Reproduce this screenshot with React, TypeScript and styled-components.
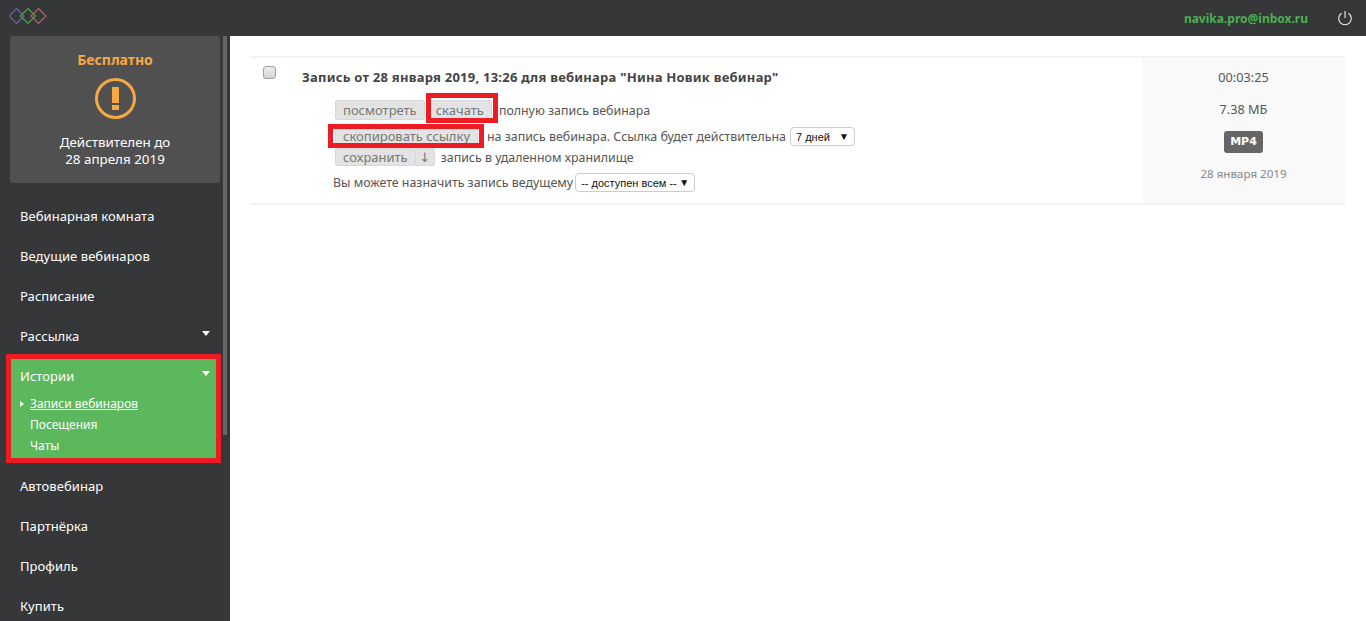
import styled, { createGlobalStyle } from "styled-components";

const GlobalStyle = createGlobalStyle`
  html, body {
    margin: 0;
    height: 100%;
    overflow: hidden;
    background: #fff;
    font-family: "Noto Sans", "DejaVu Sans", sans-serif;
  }
  * {
    box-sizing: border-box;
  }
`;

const menuTop = ["Вебинарная комната", "Ведущие вебинаров", "Расписание"];
const menuBottom = ["Автовебинар", "Партнёрка", "Профиль", "Купить"];

const App = () => {
  return (
    <Page>
      <GlobalStyle />
      <Header>
        <Logo width="40" height="18" viewBox="0 0 40 18" fill="none" strokeWidth="1.2">
          <path d="M7.5 1.5 L15 9 L7.5 16.5 L0 9 Z" stroke="#6666a0" />
          <path d="M19 1.5 L26.5 9 L19 16.5 L11.5 9 Z" stroke="#4fa04a" />
          <path d="M29.5 1.5 L37 9 L29.5 16.5 L22 9 Z" stroke="#b06868" />
        </Logo>
        <HeaderRight>
          <Email>navika.pro@inbox.ru</Email>
          <svg width="16" height="16" viewBox="0 0 16 16" fill="none" stroke="#f0f0f0" strokeWidth="1.1">
            <path d="M4.6 3.2 A6.3 6.3 0 1 0 11.4 3.2" />
            <path d="M8 1 V8" />
          </svg>
        </HeaderRight>
      </Header>
      <Body>
        <Sidebar>
          <PlanCard>
            <PlanTitle>Бесплатно</PlanTitle>
            <svg width="41" height="41" viewBox="0 0 41 41">
              <circle cx="20.5" cy="20.5" r="19" fill="none" stroke="#f5a945" strokeWidth="3" />
              <rect x="17" y="9" width="7" height="16" fill="#f5a945" />
              <rect x="17" y="27" width="7" height="5" fill="#f5a945" />
            </svg>
            <PlanText>
              Действителен до
              <br />
              28 апреля 2019
            </PlanText>
          </PlanCard>
          <Menu>
            {menuTop.map((item) => (
              <MenuItem key={item}>{item}</MenuItem>
            ))}
            <MenuItem>
              Рассылка
              <Caret />
            </MenuItem>
            <ActiveGroup>
              <ActiveTitle>
                Истории
                <Caret />
              </ActiveTitle>
              <SubItem $current>Записи вебинаров</SubItem>
              <SubItem>Посещения</SubItem>
              <SubItem>Чаты</SubItem>
              <GroupFrame />
            </ActiveGroup>
            {menuBottom.map((item) => (
              <MenuItem key={item}>{item}</MenuItem>
            ))}
          </Menu>
          <ScrollThumb />
        </Sidebar>
        <Content>
          <Record>
            <RecordMain>
              <Check />
              <RecordBody>
                <RecordTitle>Запись от 28 января 2019, 13:26 для вебинара "Нина Новик вебинар"</RecordTitle>
                <Lines>
                  <Line $top={0}>
                    <Btn>посмотреть</Btn>
                    <Btn $frame="-8px -7px -4px -3px">скачать</Btn>
                    <LineText $lead={4}>полную запись вебинара</LineText>
                  </Line>
                  <Line $top={6}>
                    <Btn $frame="-3px -7px -3px -8px">скопировать ссылку</Btn>
                    <LineText $lead={6}>на запись вебинара. Ссылка будет действительна</LineText>
                    <Select $width={65} $offset={1}>
                      7 дней
                      <SelectArrow>▼</SelectArrow>
                    </Select>
                  </Line>
                  <Line $top={2}>
                    <Btn $height={18}>сохранить</Btn>
                    <ArrowBtn>↓</ArrowBtn>
                    <LineText $lead={3}>запись в удаленном хранилище</LineText>
                  </Line>
                  <Line $top={6} $shift={-2}>
                    <LineText>Вы можете назначить запись ведущему</LineText>
                    <Select $width={120} $offset={-1}>
                      -- доступен всем --
                      <SelectArrow>▼</SelectArrow>
                    </Select>
                  </Line>
                </Lines>
              </RecordBody>
            </RecordMain>
            <RecordInfo>
              <InfoValue>00:03:25</InfoValue>
              <InfoValue>7.38 МБ</InfoValue>
              <Format>MP4</Format>
              <InfoDate>28 января 2019</InfoDate>
            </RecordInfo>
          </Record>
        </Content>
      </Body>
    </Page>
  );
};

const Page = styled.div`
  height: 100vh;
  display: flex;
  flex-direction: column;
  overflow: hidden;
`;
const Header = styled.header`
  height: 36px;
  flex: none;
  background: #363739;
  display: flex;
  align-items: center;
  justify-content: space-between;
  padding: 0 13px 0 9px;
`;
const Logo = styled.svg`
  margin-bottom: 4px;
`;
const HeaderRight = styled.div`
  display: flex;
  align-items: center;
  gap: 29px;
`;
const Email = styled.span`
  color: #4caf50;
  font-size: 12px;
  font-weight: 700;
`;
const Body = styled.div`
  flex: 1;
  display: flex;
  min-height: 0;
`;
const Sidebar = styled.aside`
  position: relative;
  width: 230px;
  flex: none;
  background: #363739;
  padding-right: 10px;
  padding-left: 10px;
`;
const ScrollThumb = styled.div`
  position: absolute;
  top: 0;
  left: 223px;
  width: 4px;
  height: 399px;
  background: #666;
`;
const PlanCard = styled.div`
  height: 147px;
  background: #505050;
  border-radius: 3px;
  display: flex;
  flex-direction: column;
  align-items: center;
  padding-top: 14px;
`;
const PlanTitle = styled.div`
  color: #f5a945;
  font-size: 14px;
  font-weight: 700;
  line-height: 20px;
  margin-bottom: 8px;
`;
const PlanText = styled.div`
  color: #fff;
  font-size: 13.4px;
  line-height: 17px;
  text-align: center;
  margin-top: 15px;
`;
const Menu = styled.nav`
  margin-top: 12px;
`;
const MenuItem = styled.div`
  height: 40px;
  display: flex;
  align-items: center;
  justify-content: space-between;
  color: #fff;
  font-size: 13px;
  letter-spacing: 0.06px;
  padding: 2px 10px 0;
`;
const Caret = styled.span`
  width: 0;
  height: 0;
  border-left: 4px solid transparent;
  border-right: 4px solid transparent;
  border-top: 5px solid #fff;
  margin-bottom: 6px;
`;
const ActiveGroup = styled.div`
  position: relative;
  height: 108px;
  margin-bottom: 2px;
  background: #5cb85c;
`;
const GroupFrame = styled.div`
  position: absolute;
  top: -1px;
  left: -4px;
  width: 215px;
  height: 109px;
  border: 5px solid #ed1c24;
`;
const ActiveTitle = styled(MenuItem)`
  height: 38px;
  padding-top: 4px;
`;
const SubItem = styled.div<{ $current?: boolean }>`
  position: relative;
  color: #fff;
  font-size: 12px;
  line-height: 21px;
  padding-left: 20px;
  text-decoration: ${(p) => (p.$current ? "underline" : "none")};
  &::before {
    content: "";
    display: ${(p) => (p.$current ? "block" : "none")};
    position: absolute;
    left: 10px;
    top: 8px;
    border-left: 4px solid #fff;
    border-top: 3px solid transparent;
    border-bottom: 3px solid transparent;
  }
`;
const Content = styled.main`
  flex: 1;
  background: #fff;
  padding: 20px 21px 0 20px;
`;
const Record = styled.section`
  height: 149px;
  border-top: 2px solid #f3f3f3;
  border-bottom: 2px solid #f3f3f3;
  display: flex;
`;
const RecordMain = styled.div`
  flex: 1;
  display: flex;
  padding: 8px 0 0 13px;
`;
const Check = styled.span`
  width: 13px;
  height: 13px;
  background: linear-gradient(#ededed, #d5d5d5);
  border: 1px solid #a0a0a0;
  border-radius: 3px;
`;
const RecordBody = styled.div`
  margin-left: 26px;
`;
const RecordTitle = styled.div`
  color: #444;
  font-size: 13px;
  letter-spacing: 0.24px;
  font-weight: 700;
  line-height: 20px;
  margin-top: 1px;
`;
const Lines = styled.div`
  margin-top: 13px;
  padding-left: 33px;
`;
const Line = styled.div<{ $top: number; $shift?: number }>`
  display: flex;
  align-items: center;
  gap: 3px;
  margin-top: ${(p) => p.$top}px;
  margin-left: ${(p) => p.$shift ?? 0}px;
`;
const Btn = styled.span<{ $frame?: string; $height?: number }>`
  position: relative;
  height: ${(p) => p.$height ?? 20}px;
  display: inline-flex;
  align-items: center;
  padding: 0 7px;
  background: #e3e3e3;
  border: 1px solid #d8d8d8;
  border-radius: 2px;
  color: #777;
  font-size: 13px;
  &::after {
    content: "";
    display: ${(p) => (p.$frame ? "block" : "none")};
    position: absolute;
    inset: ${(p) => p.$frame ?? "0"};
    border: 5px solid #ed1c24;
  }
`;
const ArrowBtn = styled(Btn)`
  width: 20px;
  height: 18px;
  margin-left: -4px;
  justify-content: center;
  padding: 0;
`;
const LineText = styled.span<{ $lead?: number }>`
  color: #555;
  font-size: 12.4px;
  white-space: nowrap;
  margin-left: ${(p) => p.$lead ?? 0}px;
`;
const Select = styled.span<{ $width: number; $offset: number }>`
  width: ${(p) => p.$width}px;
  height: 19px;
  margin-top: 1px;
  margin-left: ${(p) => p.$offset}px;
  display: inline-flex;
  align-items: center;
  justify-content: space-between;
  padding: 0 5px 0 5px;
  background: #fff;
  border: 1px solid #ccc;
  border-radius: 4px;
  color: #111;
  font-family: "Liberation Sans", Arial, sans-serif;
  font-size: 11px;
  white-space: nowrap;
`;
const SelectArrow = styled.span`
  font-size: 10px;
  color: #111;
`;
const RecordInfo = styled.aside`
  width: 203px;
  margin-top: 1px;
  background: #f9f9f9;
  display: flex;
  flex-direction: column;
  align-items: center;
  padding-top: 8px;
`;
const InfoValue = styled.div`
  color: #555;
  font-size: 12.7px;
  line-height: 20px;
  margin-bottom: 12px;
`;
const Format = styled.span`
  background: #666;
  color: #fff;
  border-radius: 3px;
  font-family: "DejaVu Sans", sans-serif;
  font-size: 11px;
  font-weight: 700;
  line-height: 22px;
  padding: 0 6px;
`;
const InfoDate = styled.div`
  color: #888;
  font-size: 11.6px;
  line-height: 20px;
  margin-top: 11px;
`;

export default App;
